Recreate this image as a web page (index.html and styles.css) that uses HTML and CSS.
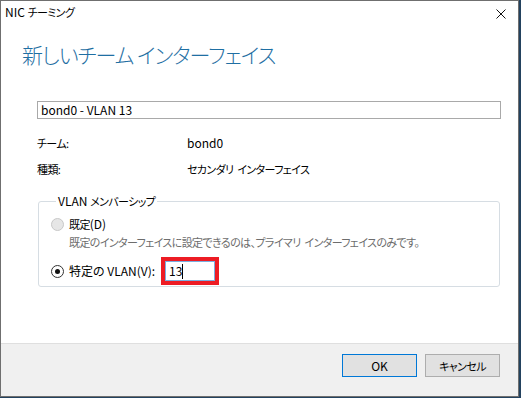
FILE: index.html
```html
<!DOCTYPE html>
<html lang="ja">
<head>
    <meta charset="UTF-8">
    <title>NIC チーミング</title>
    <link rel="stylesheet" href="styles.css">
</head>
<body>
    <div class="window">
        <div class="titlebar">
            <span class="title">NIC <span class="ja">チーミング</span></span>
            <svg class="close" width="10" height="10" viewBox="0 0 10 10">
                <path d="M0.5 0.5 L9.5 9.5 M9.5 0.5 L0.5 9.5" stroke="#111" stroke-width="1" fill="none"/>
            </svg>
        </div>

        <div class="content">
            <h1>新しいチーム インターフェイス</h1>

            <div class="name-box">bond0 - VLAN 13</div>

            <div class="info-row first">
                <span class="info-label ja">チーム:</span>
                <span class="info-value">bond0</span>
            </div>
            <div class="info-row">
                <span class="info-label ja">種類:</span>
                <span class="info-value ja">セカンダリ インターフェイス</span>
            </div>

            <fieldset class="group">
                <legend>VLAN <span class="ja">メンバーシップ</span></legend>
                <div class="radio-row">
                    <span class="radio disabled"></span>
                    <span><span class="ja">既定</span>(D)</span>
                </div>
                <div class="hint ja">既定のインターフェイスに設定できるのは、プライマリ インターフェイスのみです。</div>
                <div class="radio-row vlan-row">
                    <span class="radio checked"></span>
                    <span>特定の VLAN(V):</span>
                    <div class="highlight">
                        <div class="vlan-input">13<span class="caret"></span></div>
                    </div>
                </div>
            </fieldset>
        </div>

        <div class="footer">
            <button class="btn default">OK</button>
            <button class="btn"><span class="ja">キャンセル</span></button>
        </div>
    </div>
</body>
</html>
```

FILE: styles.css
```css
body {
    margin: 0;
    background-color: #23425e;
    font-family: "Noto Sans CJK JP", "Noto Sans", sans-serif;
    font-size: 12px;
    color: #000;
    font-feature-settings: "palt";
}
.ja {
    font-size: 11px;
    letter-spacing: -0.6px;
    word-spacing: 2px;
}
.window {
    width: 519px;
    height: 397px;
    box-sizing: border-box;
    border: 1px solid #6f6f6f;
    background: #fff;
    display: flex;
    flex-direction: column;
}
.titlebar {
    height: 29px;
    display: flex;
    justify-content: space-between;
    align-items: flex-start;
    padding: 0 12px 0 4px;
    flex-shrink: 0;
}
.title {
    line-height: 22px;
}
.close {
    margin-top: 8px;
}
.content {
    flex: 1;
    padding: 0 18px 0 36px;
}
h1 {
    margin: 9px 0 0 -15px;
    font-size: 21px;
    font-weight: 300;
    letter-spacing: -1px;
    line-height: 30px;
    color: #1f6fa3;
}
.name-box {
    margin-top: 32px;
    height: 18px;
    width: 464px;
    box-sizing: border-box;
    border: 1px solid #a9a9a9;
    padding: 0 3px;
    line-height: 16px;
}
.info-row {
    display: flex;
    line-height: 26px;
}
.info-row.first {
    margin-top: 11px;
}
.info-label {
    width: 150px;
}
.group {
    margin: 11px 0 0 1px;
    width: 462px;
    box-sizing: border-box;
    border: 1px solid #d6dde3;
    border-radius: 3px;
    padding: 5px 0 1px 12px;
}
.group legend {
    margin-left: 5px;
    padding: 0 2px;
    line-height: 16px;
}
.radio-row {
    display: flex;
    align-items: center;
    gap: 5px;
    line-height: 20px;
}
.radio {
    width: 13px;
    height: 13px;
    box-sizing: border-box;
    border-radius: 50%;
    border: 1px solid #333;
    background: #fff;
    position: relative;
}
.radio.disabled {
    border-color: #c8c8c8;
    background: #e6e6e6;
}
.radio.checked::after {
    content: "";
    position: absolute;
    left: 3px;
    top: 3px;
    width: 5px;
    height: 5px;
    border-radius: 50%;
    background: #111;
}
.hint {
    margin-left: 18px;
    line-height: 20px;
    margin-top: -2px;
    color: #6d6d6d;
}
.vlan-row {
    margin-top: 5px;
    height: 28px;
}
.highlight {
    margin-left: 1px;
    border: 4px solid #ed1c24;
    width: 58px;
    height: 28px;
    box-sizing: border-box;
}
.vlan-input {
    height: 20px;
    border: 1px solid #7aaee0;
    box-sizing: border-box;
    padding-left: 3px;
    line-height: 16px;
    display: flex;
    align-items: center;
}
.caret {
    width: 1px;
    height: 15px;
    background: #000;
}
.footer {
    height: 42px;
    flex-shrink: 0;
    border-top: 1px solid #dfdfdf;
    background: #f0f0f0;
    display: flex;
    justify-content: flex-end;
    align-items: flex-start;
    gap: 8px;
    padding: 10px 18px 0 0;
}
.btn {
    width: 75px;
    height: 23px;
    border: 1px solid #adadad;
    background: #e1e1e1;
    font-family: inherit;
    font-size: 12px;
    color: #000;
    padding: 0;
    font-feature-settings: "palt";
}
.btn.default {
    border-color: #0078d7;
}
```
